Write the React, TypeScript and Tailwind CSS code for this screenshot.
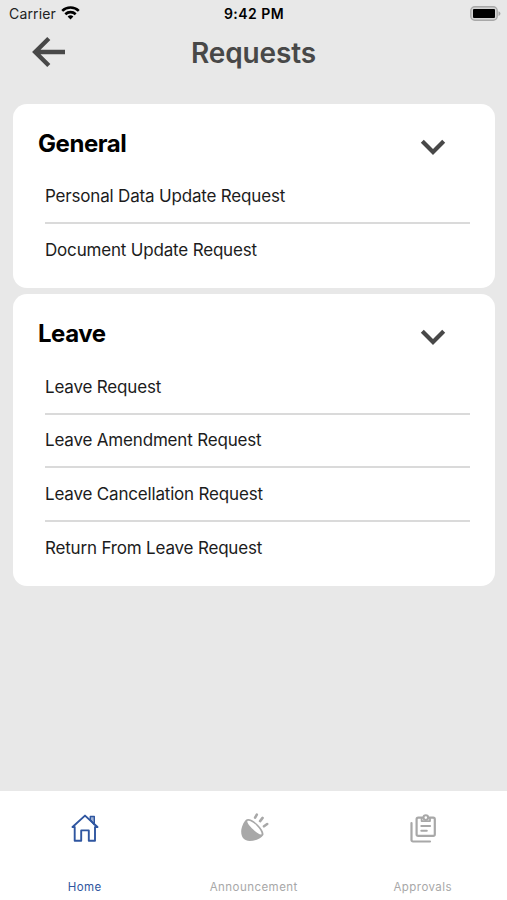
import { ReactNode } from 'react';

const SECTIONS = [
  {
    title: 'General',
    items: ['Personal Data Update Request', 'Document Update Request'],
  },
  {
    title: 'Leave',
    items: [
      'Leave Request',
      'Leave Amendment Request',
      'Leave Cancellation Request',
      'Return From Leave Request',
    ],
  },
];

export default function App() {
  return (
    <div className="flex h-[900px] w-full flex-col overflow-hidden bg-[#e8e8e8] font-['Inter','Liberation_Sans',sans-serif]">
      <StatusBar />

      <header className="grid h-[49px] shrink-0 grid-cols-[1fr_auto_1fr] items-center">
        <button type="button" aria-label="Back" className="mb-[2px] ml-[31px] w-[35px]">
          <svg viewBox="0 0 35 32" className="h-8 w-[35px]" fill="none" stroke="#484848" strokeWidth="4.4">
            <path d="M17.8 2.5 4.2 16l13.6 13.5M4 16h30" />
          </svg>
        </button>
        <h1 className="text-[28px] leading-8 font-semibold tracking-[-0.15px] text-[#484848]">Requests</h1>
      </header>

      <main className="flex flex-1 flex-col gap-[6px] pt-[26.5px] pr-3 pl-[13px]">
        {SECTIONS.map((section) => (
          <Section key={section.title} title={section.title} items={section.items} />
        ))}
      </main>

      <nav className="grid h-[109px] shrink-0 grid-cols-3 bg-white">
        <Tab label="Home" active icon={<HomeIcon />} />
        <Tab label="Announcement" icon={<AnnouncementIcon />} />
        <Tab label="Approvals" icon={<ApprovalsIcon />} />
      </nav>
    </div>
  );
}

function StatusBar() {
  return (
    <div className="grid h-7 shrink-0 grid-cols-[1fr_auto_1fr] items-center pr-[6px] pl-[9px] text-[14px] leading-none text-black">
      <div className="flex items-center gap-[5px]">
        <span className="tracking-[0.15px] text-[#222]">Carrier</span>
        <svg viewBox="0 0 19 14" className="mb-[2px] h-[14px] w-[19px]" fill="none" stroke="#000" strokeWidth="2.6">
          <path d="M1.2 4.9a12 12 0 0 1 16.6 0" />
          <path d="M4.3 8.2a7.6 7.6 0 0 1 10.4 0" />
          <path d="m9.5 13.6-2.9-3a4.2 4.2 0 0 1 5.8 0z" fill="#000" stroke="none" />
        </svg>
      </div>
      <span className="-ml-[2px] font-semibold tracking-[0.45px]">9:42 PM</span>
      <svg viewBox="0 0 31 15" className="mb-[2px] h-[15px] w-[31px] justify-self-end">
        <rect x="0.8" y="0.8" width="26.4" height="13.4" rx="4" fill="#d4d4d4" stroke="#a8a8a8" strokeWidth="1.4" />
        <rect x="3" y="3" width="22" height="9" rx="1" fill="#000" />
        <path d="M28.5 5.2c2.6 1 2.6 3.8 0 4.8z" fill="#a3a3a3" />
      </svg>
    </div>
  );
}

function Section({ title, items }: { title: string; items: string[] }) {
  return (
    <section className="rounded-[14px] bg-white pr-[25px] pb-[10.5px] pl-8">
      <div className="-ml-[7px] flex h-[66.8px] items-center justify-between pt-[13.5px] pr-6">
        <h2 className="text-[24px] leading-8 font-bold tracking-[-0.45px] text-black">{title}</h2>
        <svg viewBox="0 0 26 16" className="mt-[6px] h-4 w-[26px]" fill="none" stroke="#484848" strokeWidth="4.2">
          <path d="M2.3 2.3 13 13 23.7 2.3" />
        </svg>
      </div>
      <ul className="divide-y-2 divide-[#dadada]">
        {items.map((item) => (
          <li
            key={item}
            className="flex h-[53.7px] items-center pt-[1px] text-[17px] tracking-[-0.18px] text-[#1c1c1c] last:pb-[2px]"
          >
            {item}
          </li>
        ))}
      </ul>
    </section>
  );
}

function Tab({ label, icon, active = false }: { label: string; icon: ReactNode; active?: boolean }) {
  return (
    <a className={`flex flex-col items-center pt-[21px] ${active ? 'text-[#2f56a0]' : 'text-[#a8a8a8]'}`}>
      {icon}
      <span className="mt-[35px] ml-[0.5px] text-[11.5px] leading-4 tracking-[0.45px]">{label}</span>
    </a>
  );
}

function HomeIcon() {
  return (
    <svg viewBox="0 0 32 32" className="h-8 w-8" fill="none" stroke="currentColor" strokeWidth="1.9" strokeLinejoin="round" strokeLinecap="round">
      <path d="M3.5 15 16 3.6 28.5 15H26v13.7h-6.2V18.4h-7.6v10.3H5.7V15z" />
      <path d="M21.3 8V4.5h4v8.2z" fill="currentColor" fillOpacity="0.45" strokeWidth="1.4" />
    </svg>
  );
}

function AnnouncementIcon() {
  return (
    <svg viewBox="0 0 32 32" className="h-8 w-8">
      <path d="M8 7.8C5.6 10 3.3 15.4 3.2 19.5c-.1 5.9 3.2 9.4 8.5 9.4 5.2 0 11.2-2.3 13.5-5.7 1.2-2-1.3-6.6-5.3-10.500C15.500 8.200 10.300 5.800 8 7.800z" fill="currentColor" />
      <path d="M9.4 9c2-.8 6 1.3 9.3 4.7 3.6 3.7 5.5 7.6 4.7 8.8-1.3.6-5-1.7-8.4-5.2C11.6 13.9 8.8 10.4 9.4 9z" fill="#fff" />
      <path d="m18.8 2.6-1.7 3M24.6 5.9l-2.5 3.2M29.2 12l-3.2 2.3" fill="none" stroke="currentColor" strokeWidth="2.6" strokeLinecap="round" />
    </svg>
  );
}

function ApprovalsIcon() {
  return (
    <svg viewBox="0 0 32 32" className="h-8 w-8" fill="none" stroke="currentColor" strokeWidth="2.2" strokeLinejoin="round" strokeLinecap="round">
      <path d="M4.5 11v17A1.5 1.5 0 0 0 6 29.500h17" />
      <rect x="9.6" y="5.6" width="18.2" height="18.2" rx="1.6" />
      <path d="M14.6 6.3v2.8H23V6.3" strokeWidth="1.8" />
      <circle cx="18.8" cy="5.6" r="2.3" fill="#fff" strokeWidth="2" />
      <path d="M14.3 14h8.8M14.3 18.7h5.5" strokeWidth="2" />
    </svg>
  );
}
